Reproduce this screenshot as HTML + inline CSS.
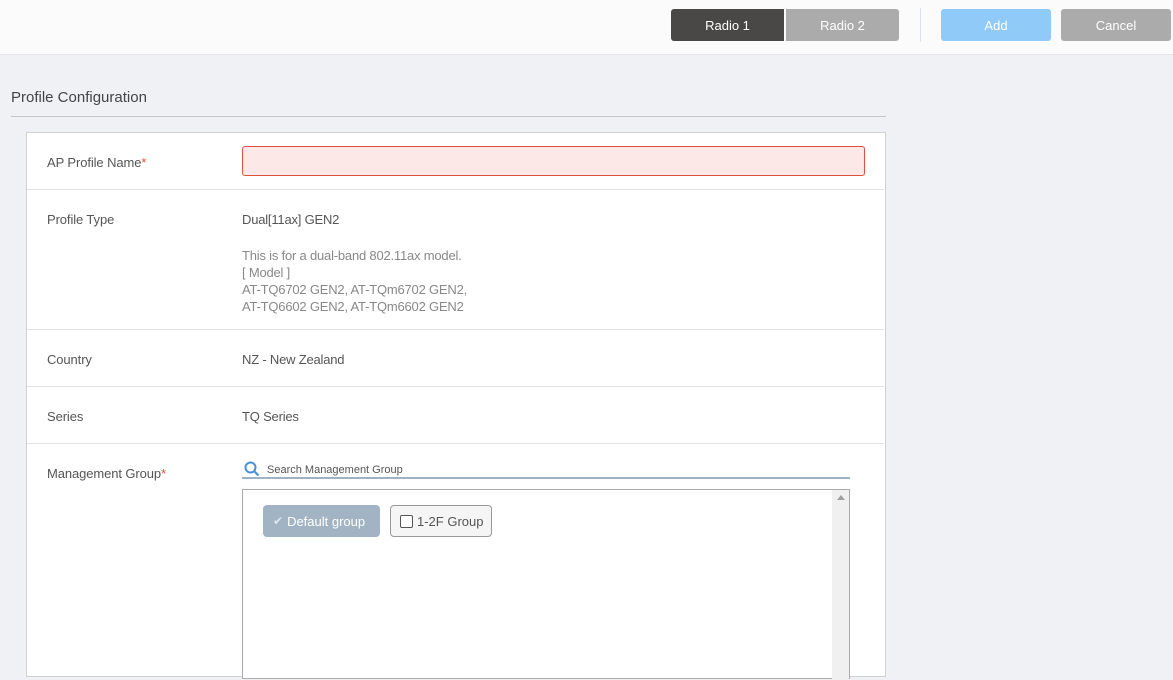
<!DOCTYPE html>
<html><head><meta charset="utf-8"><style>
*{box-sizing:border-box;margin:0;padding:0}
body{width:1173px;height:673px;overflow:hidden;background:#f0f1f5;font-family:"Liberation Sans",sans-serif;color:#555;position:relative}
.a{position:absolute}
.hdr{left:0;top:0;width:1173px;height:55px;background:#fbfbfc;border-bottom:1px solid #e2e4ea}
.btn{top:9px;height:32px;color:#fff;font-size:13px;display:flex;align-items:center;justify-content:center;border-radius:3px}
.lbl{left:47px;font-size:13px;color:#555;letter-spacing:-0.1px}
.val{left:242px;font-size:13px;color:#555;letter-spacing:-0.2px}
.row{left:27px;width:857px;height:1px;background:#e2e2e2}
</style></head><body>
<div class="a hdr"></div>
<div class="a btn" style="left:671px;width:113px;background:#4a4846;border-radius:3px 0 0 3px">Radio 1</div>
<div class="a btn" style="left:786px;width:113px;background:#ababab;border-radius:0 3px 3px 0">Radio 2</div>
<div class="a" style="left:920px;top:8px;width:1px;height:34px;background:#dde2ea"></div>
<div class="a btn" style="left:941px;width:110px;background:#90caf9">Add</div>
<div class="a btn" style="left:1061px;width:110px;background:#ababab">Cancel</div>

<div class="a" style="left:11px;top:89px;font-size:15px;color:#444">Profile Configuration</div>
<div class="a" style="left:11px;top:116px;width:875px;height:1px;background:#c4c6cc"></div>
<div class="a" style="left:26px;top:132px;width:860px;height:545px;background:#fff;border:1px solid #d0d0d0"></div>

<div class="a lbl" style="top:155px">AP Profile Name<span style="color:#e05040">*</span></div>
<div class="a" style="left:242px;top:146px;width:623px;height:30px;background:#fde8e8;border:1px solid #e05040;border-radius:3px"></div>
<div class="a row" style="top:189px"></div>

<div class="a lbl" style="top:212px">Profile Type</div>
<div class="a val" style="top:212px">Dual[11ax] GEN2</div>
<div class="a val" style="top:247px;color:#888;line-height:17px">This is for a dual-band 802.11ax model.<br>[ Model ]<br>AT-TQ6702 GEN2, AT-TQm6702 GEN2,<br>AT-TQ6602 GEN2, AT-TQm6602 GEN2</div>
<div class="a row" style="top:329px"></div>

<div class="a lbl" style="top:352px">Country</div>
<div class="a val" style="top:352px">NZ - New Zealand</div>
<div class="a row" style="top:386px"></div>

<div class="a lbl" style="top:409px">Series</div>
<div class="a val" style="top:409px">TQ Series</div>
<div class="a row" style="top:443px"></div>

<div class="a lbl" style="top:466px">Management Group<span style="color:#e05040">*</span></div>
<svg class="a" style="left:244px;top:461px" width="16" height="16" viewBox="0 0 16 16"><circle cx="6.5" cy="6.5" r="5" fill="none" stroke="#4a90d9" stroke-width="2"/><path d="M10 10l4.5 4.5" stroke="#4a90d9" stroke-width="2.2"/></svg>
<div class="a" style="left:267px;top:464px;font-size:11px;color:#555">Search Management Group</div>
<div class="a" style="left:242px;top:477px;width:608px;height:2px;background:#9fb2c4"></div>
<div class="a" style="left:242px;top:489px;width:608px;height:190px;border:1px solid #aaa;background:#fff"></div>
<div class="a" style="left:832px;top:490px;width:17px;height:190px;background:#f0f0f0"></div>
<div class="a" style="left:837px;top:495px;width:0;height:0;border-left:4px solid transparent;border-right:4px solid transparent;border-bottom:5px solid #a0a0a0"></div>
<div class="a" style="left:263px;top:505px;width:117px;height:32px;background:#a2b4c4;border-radius:4px;color:#fff;font-size:13px;display:flex;align-items:center;padding-left:10px"><span style="font-size:12px;margin-right:4px;color:#dfe6ec">✔</span>Default group</div>
<div class="a" style="left:390px;top:505px;width:102px;height:32px;background:#f5f5f5;border:1px solid #999;border-radius:4px;font-size:13px;display:flex;align-items:center;padding-left:9px;color:#555"><span style="display:inline-block;width:13px;height:13px;border:1px solid #555;border-radius:2px;background:#fff;margin-right:4px"></span>1-2F Group</div>
</body></html>
